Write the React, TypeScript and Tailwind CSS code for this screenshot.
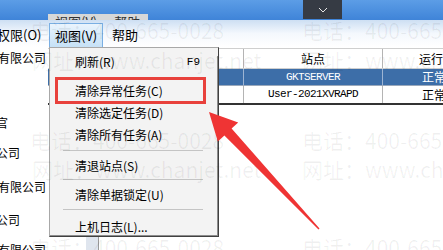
export default function App() {
  return (
    <div className="relative h-[250px] w-[443px] overflow-hidden bg-white font-['Noto_Sans_CJK_SC',sans-serif] text-[12px] text-black">
      <TitleStrip />
      <MenuBar />
      <div className="flex">
        <TreePanel />
        <StationTable />
      </div>
      <div className="absolute left-[86px] top-[237px] h-[13px] w-[13px] border-r border-[#9a9a9a] bg-[#dfe5ee]" />
      <ViewMenu />
      <div className="pointer-events-none absolute left-[55px] top-[77px] h-[27px] w-[151px] border-[3px] border-[#e8413c]" />
      <Watermark />
      <Arrow />
    </div>
  );
}

function TitleStrip() {
  return (
    <div className="flex h-[20px] bg-gradient-to-b from-[#5c9de6] to-[#3f84d8]">
      <div className="ml-[48px] mt-[14px] h-[6px] w-[100px] overflow-hidden bg-[#d8d8d8]">
        <div className="flex whitespace-nowrap pl-[7px] pt-[1px] text-[13px] leading-[13px] text-[#333]">
          <span>视图(V)</span>
          <span className="ml-[17px]">帮助</span>
        </div>
      </div>
      <div className="ml-[155px] flex h-[19px] w-[39px] items-center justify-center bg-[#363b44]">
        <svg width="10" height="6" viewBox="0 0 10 6">
          <path d="M1 1l4 4 4-4" stroke="#e8e8e8" fill="none" strokeWidth="1" />
        </svg>
      </div>
    </div>
  );
}

function MenuBar() {
  return (
    <div className="flex h-[27px] items-end bg-gradient-to-b from-[#cddff3] via-[#f4f8fd] to-white text-[13px]">
      <div className="flex h-[24px] w-[49px] items-center overflow-hidden">
        <span className="ml-[-3px] whitespace-nowrap">权限(O)</span>
      </div>
      <div className="flex h-[24px] w-[54px] items-center border border-b-0 border-[#7aafe3] bg-gradient-to-b from-[#eaf4fd] to-[#c6e1f6] pl-[5px]">
        视图(V)
      </div>
      <div className="ml-[9px] flex h-[24px] items-center">帮助</div>
    </div>
  );
}

function TreePanel() {
  return (
    <div className="flex w-[48px] shrink-0 flex-col overflow-hidden whitespace-nowrap text-[12px] leading-[14px]">
      <div className="ml-[-2px] mt-[4px]">有限公司</div>
      <div className="ml-[-4px] mt-[51px]">官</div>
      <div className="ml-[-4px] mt-[16px]">公司</div>
      <div className="ml-[-2px] mt-[20px]">有限公司</div>
      <div className="ml-[-4px] mt-[19px]">公司</div>
      <div className="ml-[-2px] mt-[16px]">有限公司</div>
    </div>
  );
}

function StationTable() {
  return (
    <div className="mt-[1px] flex-1 whitespace-nowrap">
      <div className="flex h-[21px] border-y border-[#cfcfcf]">
        <div className="w-[196px] border-r border-[#b4b4b4]" />
        <div className="flex w-[139px] items-center justify-center border-r border-[#b4b4b4]">站点</div>
        <div className="flex items-center pl-[36px]">运行状态</div>
      </div>
      <div className="flex h-[17px] border-b border-[#9aa8bb] bg-[#3d6ea8] text-white">
        <div className="w-[196px] border-r border-[#9db4d3]" />
        <div className="flex w-[139px] items-center justify-center border-r border-[#9db4d3] font-['Liberation_Mono',monospace] text-[11px] tracking-[-0.6px]">
          GKTSERVER
        </div>
        <div className="flex items-center pl-[39px]">正常</div>
      </div>
      <div className="flex h-[19px] border-b-2 border-[#333]">
        <div className="w-[196px] border-r border-[#b4b4b4]" />
        <div className="flex w-[139px] items-center justify-center border-r border-[#b4b4b4] font-['Liberation_Mono',monospace] text-[11px] tracking-[-0.6px]">
          User-2021XVRAPD
        </div>
        <div className="flex items-center pl-[39px]">正常</div>
      </div>
    </div>
  );
}

function MenuItem(props: { label: string; shortcut?: string; gap: string }) {
  return (
    <div className={`flex items-center justify-between pl-[25px] pr-[17px] leading-[12px] ${props.gap}`}>
      <span className="whitespace-nowrap">{props.label}</span>
      {props.shortcut ? (
        <span className="font-['Liberation_Mono',monospace] text-[11px]">{props.shortcut}</span>
      ) : null}
    </div>
  );
}

function Separator(props: { gap: string }) {
  return <div className={`ml-[13px] h-px w-[140px] bg-[#c4c4c4] ${props.gap}`} />;
}

function ViewMenu() {
  return (
    <div className="absolute left-[49px] top-[47px] w-[170px] border border-[#a8a8a8] border-b-[#404040] border-r-[#404040] bg-[#f3f3f3]">
      <div className="border-b border-r border-[#8c8c8c] pb-[2px]">
        <MenuItem gap="mt-[8px]" label="刷新(R)" shortcut="F9" />
        <MenuItem gap="mt-[17px]" label="清除异常任务(C)" />
        <MenuItem gap="mt-[10px]" label="清除选定任务(D)" />
        <MenuItem gap="mt-[10px]" label="清除所有任务(A)" />
        <Separator gap="mt-[9px]" />
        <MenuItem gap="mt-[9px]" label="清退站点(S)" />
        <Separator gap="mt-[7px]" />
        <MenuItem gap="mt-[9px]" label="清除单据锁定(U)" />
        <Separator gap="mt-[8px]" />
        <MenuItem gap="mt-[11px]" label="上机日志(L)..." />
      </div>
    </div>
  );
}

function Watermark() {
  const cls =
    "absolute whitespace-nowrap font-['Noto_Sans_CJK_SC',sans-serif] text-[21px] leading-[28px] text-black/[0.06]";
  return (
    <div className="pointer-events-none absolute inset-0">
      <span className={`${cls} left-[30px] top-[16px]`}>电话：400-665-0028</span>
      <span className={`${cls} left-[302px] top-[16px]`}>电话：400-665-0028</span>
      <span className={`${cls} left-[32px] top-[46px]`}>网址：www.chanjet.net</span>
      <span className={`${cls} left-[302px] top-[46px]`}>网址：www.chanjet.net</span>
      <span className={`${cls} left-[30px] top-[126px]`}>电话：400-665-0028</span>
      <span className={`${cls} left-[302px] top-[126px]`}>电话：400-665-0028</span>
      <span className={`${cls} left-[32px] top-[155px]`}>网址：www.chanjet.net</span>
      <span className={`${cls} left-[302px] top-[155px]`}>网址：www.chanjet.net</span>
      <span className={`${cls} left-[30px] top-[233px]`}>电话：400-665-0028</span>
      <span className={`${cls} left-[302px] top-[233px]`}>电话：400-665-0028</span>
    </div>
  );
}

function Arrow() {
  return (
    <svg className="pointer-events-none absolute left-0 top-0" width="443" height="250" viewBox="0 0 443 250">
      <polygon
        points="209,112 238.2,122.4 231.6,128.6 319.5,228.5 318.5,229.5 224.4,135.4 217.8,141.6"
        fill="#ef3434"
      />
    </svg>
  );
}
